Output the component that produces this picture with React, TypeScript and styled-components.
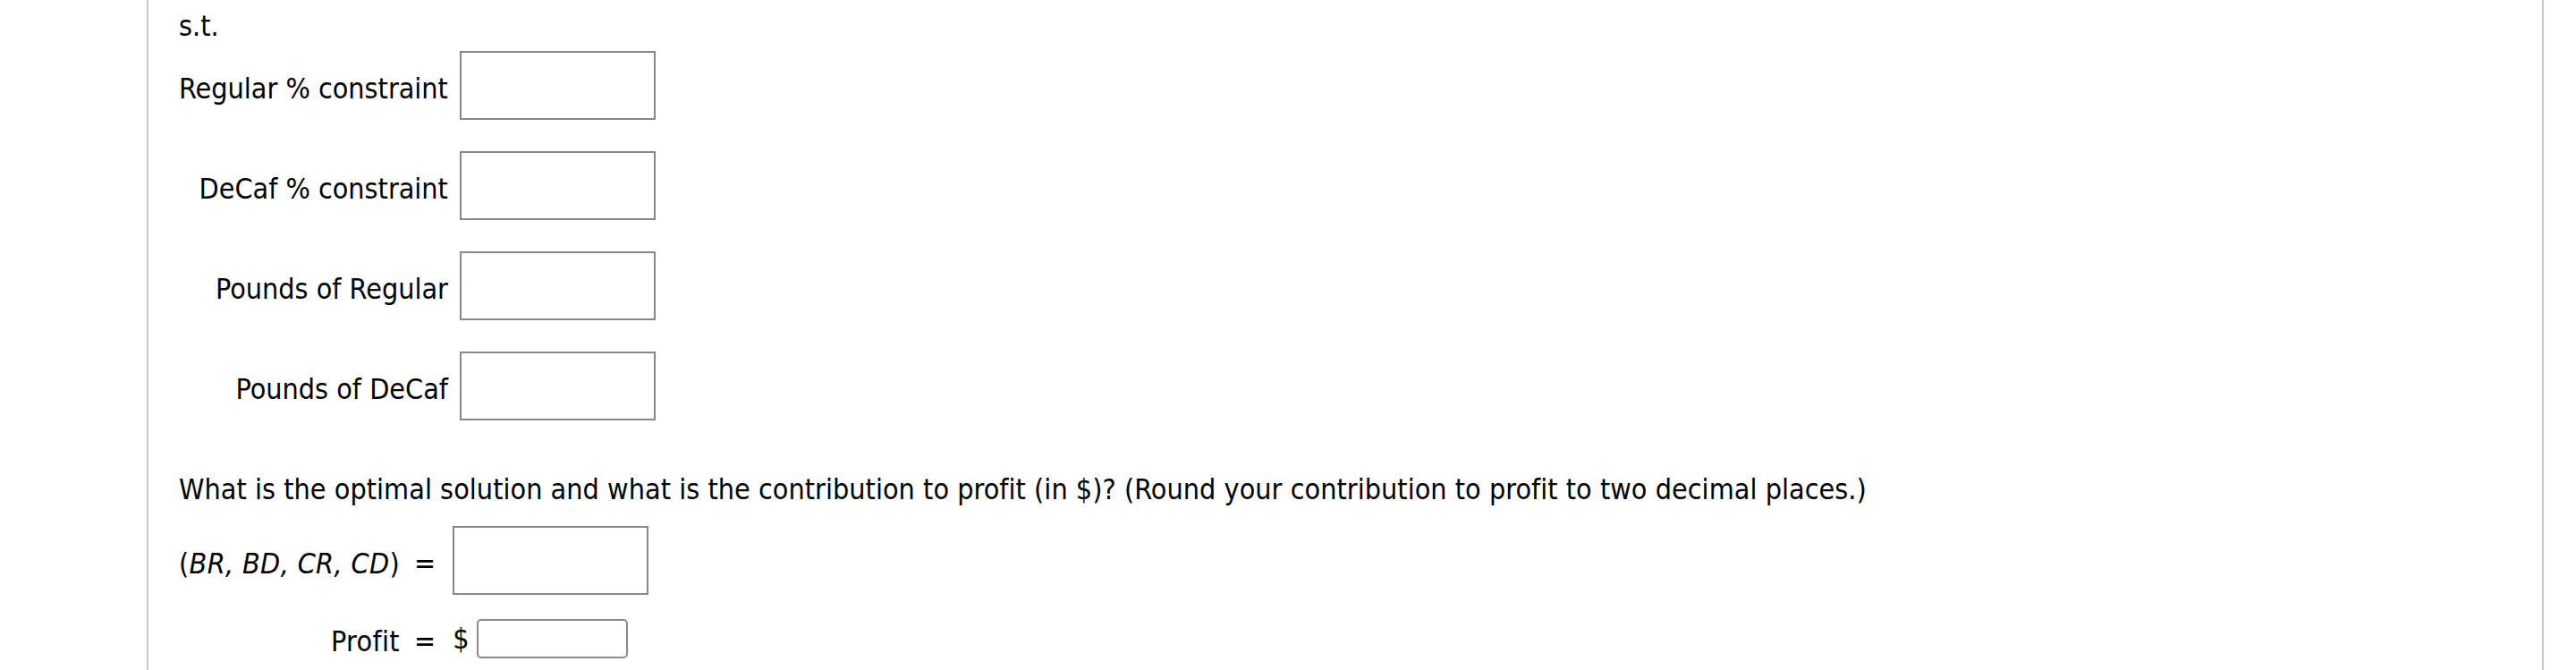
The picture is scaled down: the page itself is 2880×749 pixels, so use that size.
import styled, { createGlobalStyle } from 'styled-components';

const GlobalStyle = createGlobalStyle`
  html, body {
    margin: 0;
    padding: 0;
    background: #ffffff;
  }
  body {
    font-family: 'DejaVu Sans Condensed', 'DejaVu Sans', Verdana, sans-serif;
    font-stretch: condensed;
    font-size: 32px;
    color: #000;
  }
`;

const constraints = [
  'Regular % constraint',
  'DeCaf % constraint',
  'Pounds of Regular',
  'Pounds of DeCaf',
];

export default function App() {
  return (
    <>
      <GlobalStyle />
      <Page>
        <Line>s.t.</Line>
        <ConstraintGrid>
          {constraints.map((label) => (
            <Row key={label}>
              <Label>{label}</Label>
              <AnswerBox type="text" aria-label={label} />
            </Row>
          ))}
        </ConstraintGrid>

        <Question>
          What is the optimal solution and what is the contribution to profit (in $)? (Round your
          contribution to profit to two decimal places.)
        </Question>

        <SolutionGrid>
          <SolutionLabel>
            (<Var>BR, BD, CR, CD</Var>)
          </SolutionLabel>
          <Equals>=</Equals>
          <Value>
            <AnswerBox type="text" aria-label="solution" />
          </Value>

          <SolutionLabel>Profit</SolutionLabel>
          <Equals>=</Equals>
          <Value>
            <Dollar>$</Dollar>
            <SmallBox type="text" aria-label="profit" />
          </Value>
        </SolutionGrid>
      </Page>
    </>
  );
}

const Page = styled.div`
  box-sizing: border-box;
  margin-left: 164px;
  width: 2680px;
  min-height: 749px;
  padding: 8px 32px 0 34px;
  border-left: 2px solid #c8c8c8;
  border-right: 2px solid #c8c8c8;
`;

const Line = styled.div`
  line-height: 42px;
`;

const ConstraintGrid = styled.div`
  display: grid;
  grid-template-columns: max-content 219px;
  column-gap: 13px;
  row-gap: 35px;
  margin-top: 7px;
`;

const Row = styled.div`
  display: contents;
`;

const Label = styled.div`
  justify-self: end;
  align-self: center;
  padding-top: 7px;
  line-height: 42px;
`;

const AnswerBox = styled.input`
  box-sizing: border-box;
  width: 219px;
  height: 77px;
  margin: 0;
  border: 2px solid #878787;
  border-radius: 0;
  background: #fff;
  font: inherit;
  outline: none;
`;

const Question = styled.p`
  margin: 56px 0 0;
  line-height: 42px;
  letter-spacing: 0.04px;
`;

const SolutionGrid = styled.div`
  display: grid;
  grid-template-columns: max-content max-content max-content;
  align-items: center;
  row-gap: 25px;
  margin-top: 20px;
`;

const SolutionLabel = styled.div`
  justify-self: end;
  line-height: 42px;
  padding-top: 6px;
  letter-spacing: 0.35px;
`;

const Var = styled.span`
  font-style: italic;
`;

const Equals = styled.div`
  padding: 6px 19px 0 16px;
  line-height: 42px;
`;

const Value = styled.div`
  display: flex;
  align-items: center;
  gap: 9px;
`;

const Dollar = styled.span`
  line-height: 42px;
`;

const SmallBox = styled.input`
  box-sizing: border-box;
  width: 169px;
  height: 44px;
  margin: 0;
  border: 2px solid #8a8a8a;
  border-radius: 5px;
  background: #fff;
  font: inherit;
  outline: none;
`;
